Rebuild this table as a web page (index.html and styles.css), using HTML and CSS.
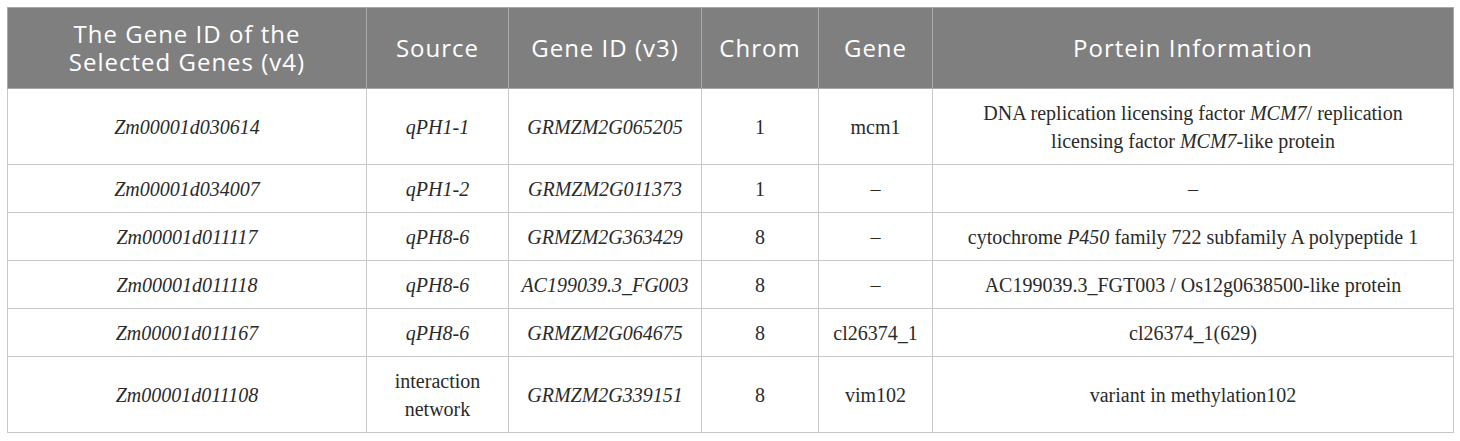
FILE: index.html
```html
<!DOCTYPE html>
<html>
<head>
<meta charset="utf-8">
<link rel="stylesheet" href="styles.css">
</head>
<body>
<table class="genes">
  <colgroup>
    <col class="c1"><col class="c2"><col class="c3"><col class="c4"><col class="c5"><col class="c6">
  </colgroup>
  <thead>
    <tr>
      <th>The Gene ID of the<br>Selected Genes (v4)</th>
      <th>Source</th>
      <th>Gene ID (v3)</th>
      <th>Chrom</th>
      <th>Gene</th>
      <th>Portein Information</th>
    </tr>
  </thead>
  <tbody>
    <tr class="tall">
      <td><i>Zm00001d030614</i></td>
      <td><i>qPH1-1</i></td>
      <td><i>GRMZM2G065205</i></td>
      <td>1</td>
      <td>mcm1</td>
      <td>DNA replication licensing factor <i>MCM7</i>/ replication<br>licensing factor <i>MCM7</i>-like protein</td>
    </tr>
    <tr>
      <td><i>Zm00001d034007</i></td>
      <td><i>qPH1-2</i></td>
      <td><i>GRMZM2G011373</i></td>
      <td>1</td>
      <td>–</td>
      <td>–</td>
    </tr>
    <tr>
      <td><i>Zm00001d011117</i></td>
      <td><i>qPH8-6</i></td>
      <td><i>GRMZM2G363429</i></td>
      <td>8</td>
      <td>–</td>
      <td>cytochrome <i>P450</i> family 722 subfamily A polypeptide 1</td>
    </tr>
    <tr>
      <td><i>Zm00001d011118</i></td>
      <td><i>qPH8-6</i></td>
      <td><i>AC199039.3_FG003</i></td>
      <td>8</td>
      <td>–</td>
      <td>AC199039.3_FGT003 / Os12g0638500-like protein</td>
    </tr>
    <tr>
      <td><i>Zm00001d011167</i></td>
      <td><i>qPH8-6</i></td>
      <td><i>GRMZM2G064675</i></td>
      <td>8</td>
      <td>cl26374_1</td>
      <td>cl26374_1(629)</td>
    </tr>
    <tr class="tall">
      <td><i>Zm00001d011108</i></td>
      <td>interaction<br>network</td>
      <td><i>GRMZM2G339151</i></td>
      <td>8</td>
      <td>vim102</td>
      <td>variant in methylation102</td>
    </tr>
  </tbody>
</table>
</body>
</html>
```

FILE: styles.css
```css
html, body {
  margin: 0;
  padding: 0;
  background: #ffffff;
}
body {
  padding: 7px;
}
.genes {
  border-collapse: collapse;
  table-layout: fixed;
  width: 1446px;
  border: 1px solid #c8c8c8;
}
.c1 { width: 359px; }
.c2 { width: 142px; }
.c3 { width: 193px; }
.c4 { width: 117px; }
.c5 { width: 114px; }
.c6 { width: 521px; }
.genes th {
  background: #7f7f7f;
  color: #ffffff;
  font-family: "Open Sans", "Liberation Sans", sans-serif;
  font-weight: 400;
  font-size: 24px;
  letter-spacing: 1px;
  line-height: 28px;
  height: 80px;
  padding: 0 4px;
  border: 1px solid #a9a9a9;
  text-align: center;
  vertical-align: middle;
}
.genes td {
  font-family: "Liberation Serif", "DejaVu Serif", serif;
  font-size: 20px;
  line-height: 28px;
  color: #2a2a2a;
  height: 47px;
  padding: 0 6px;
  border: 1px solid #c8c8c8;
  text-align: center;
  vertical-align: middle;
}
.genes tr.tall td {
  height: 75px;
}
```
